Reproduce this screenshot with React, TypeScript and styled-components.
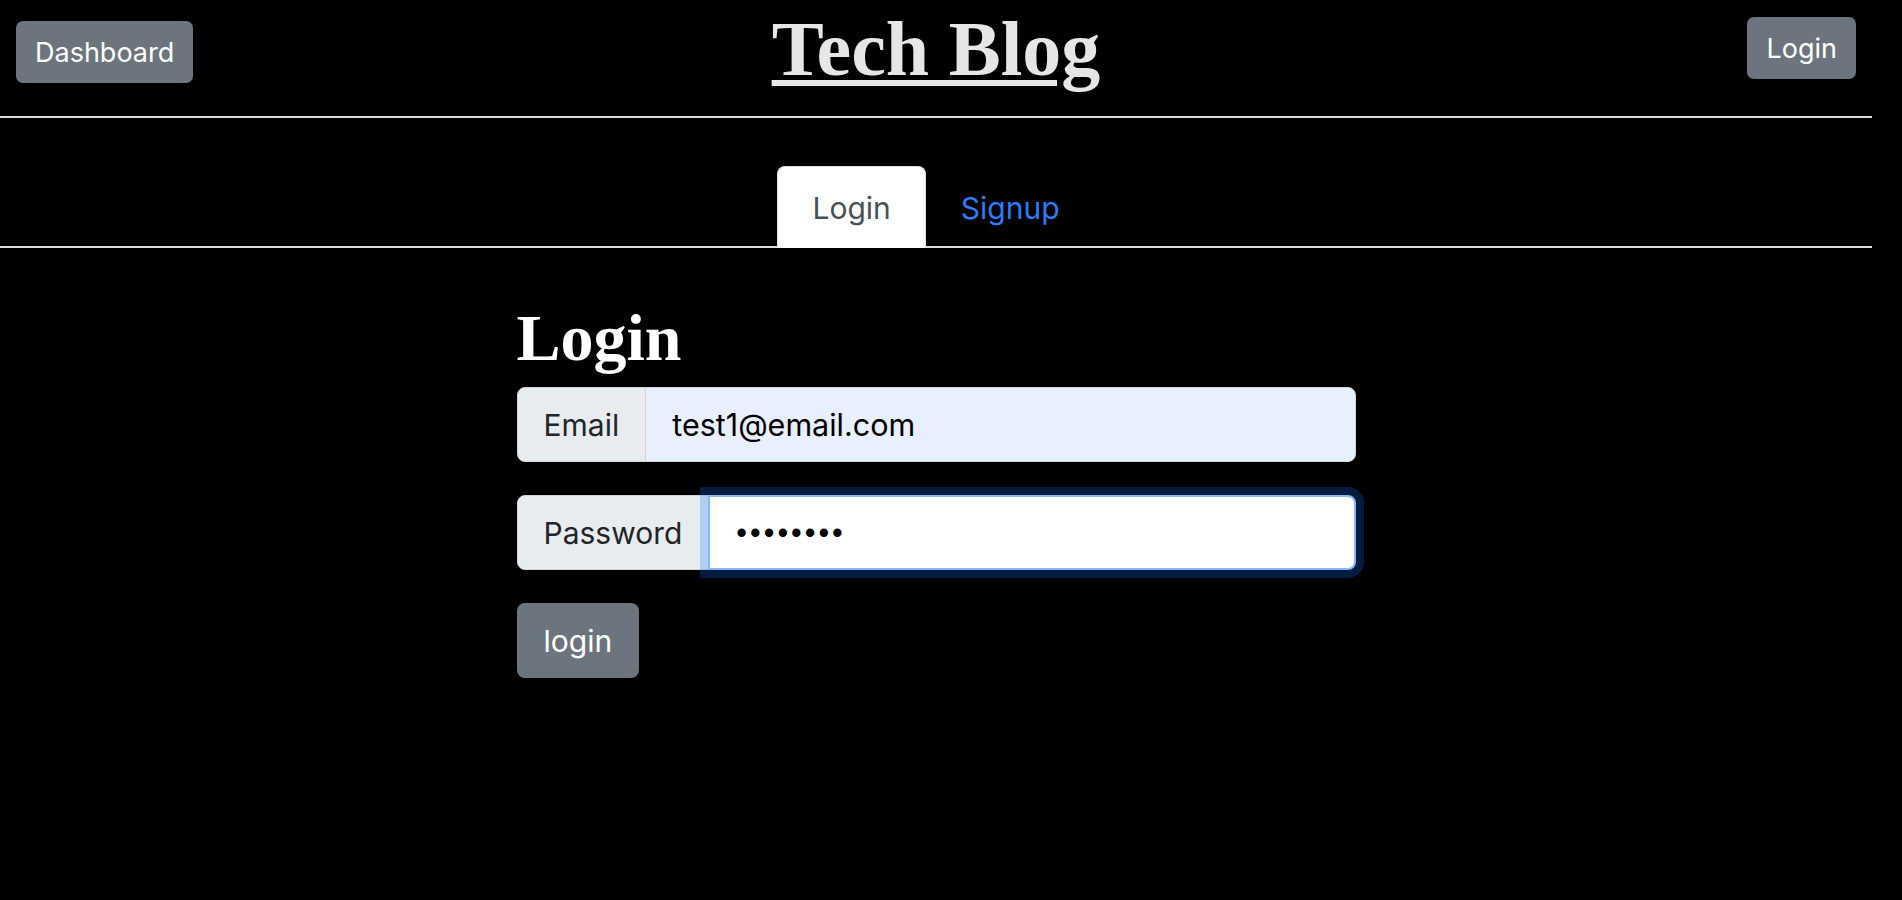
import React from "react";
import styled, { createGlobalStyle } from "styled-components";

const Global = createGlobalStyle`
  html, body { margin: 0; padding: 0; background: #000; }
  body { font-family: Inter, "Noto Sans", sans-serif; }
  * { box-sizing: border-box; }
`;

const Page = styled.div`
  width: 1872px;
  min-height: 900px;
  background: #000;
`;

const Header = styled.header`
  display: grid;
  grid-template-columns: 1fr auto 1fr;
  align-items: start;
  height: 118px;
  padding: 0 16px;
  border-bottom: 2px solid #dedede;
`;

const HeaderSlot = styled.div<{ $align: "start" | "end"; $top: number }>`
  display: flex;
  justify-content: ${(p) => (p.$align === "start" ? "flex-start" : "flex-end")};
  padding-top: ${(p) => p.$top}px;
`;

const Button = styled.button<{ $h: number }>`
  height: ${(p) => p.$h}px;
  padding: 0 19px;
  border: none;
  border-radius: 7px;
  background: #6c757d;
  color: #fff;
  font-family: Inter, "Noto Sans", sans-serif;
  font-size: 27px;
  line-height: 1;
  cursor: pointer;
`;

const Title = styled.h1`
  margin: 0;
  padding-top: 6px;
  font-family: "Liberation Serif", "DejaVu Serif", serif;
  font-weight: 700;
  font-size: 78px;
  line-height: 86px;
  color: #e6e6e6;
  text-decoration: underline;
  text-decoration-thickness: 6px;
  text-underline-offset: 5px;
`;

const TabBar = styled.nav`
  display: flex;
  justify-content: center;
  padding-top: 48px;
  border-bottom: 2px solid #dedede;
`;

const Tab = styled.a<{ $active?: boolean }>`
  display: flex;
  align-items: center;
  height: 82px;
  padding: 0 34px;
  margin-bottom: -2px;
  font-size: 30px;
  text-decoration: none;
  color: ${(p) => (p.$active ? "#495057" : "#2b7cf6")};
  background: ${(p) => (p.$active ? "#fff" : "transparent")};
  border: 1px solid ${(p) => (p.$active ? "#dee2e6" : "transparent")};
  border-bottom: none;
  border-radius: 8px 8px 0 0;
`;

const Main = styled.main`
  width: 839px;
  margin: 0 auto;
  padding-top: 50px;
  display: flex;
  flex-direction: column;
  align-items: flex-start;
`;

const Heading = styled.h2`
  margin: 0 0 9px;
  font-family: "Liberation Serif", "DejaVu Serif", serif;
  font-weight: 700;
  font-size: 66px;
  line-height: 80px;
  color: #fff;
`;

const Group = styled.div`
  display: flex;
  width: 100%;
  height: 75px;
  margin-bottom: 33px;
`;

const Label = styled.span`
  display: flex;
  align-items: center;
  padding: 0 26px;
  background: #e9ecef;
  border: 1px solid #ced4da;
  border-radius: 8px 0 0 8px;
  color: #212529;
  font-size: 30px;
`;

const Field = styled.input<{ $focused?: boolean; $autofill?: boolean; $secret?: boolean }>`
  flex: 1;
  min-width: 0;
  margin-left: -1px;
  padding: 0 26px;
  font-family: ${(p) => (p.$secret ? `"Liberation Sans", Arial, sans-serif` : `Inter, "Noto Sans", sans-serif`)};
  font-size: 30.5px;
  letter-spacing: ${(p) => (p.$secret ? "3px" : "0")};
  color: #000;
  outline: none;
  border-radius: 0 8px 8px 0;
  background: ${(p) => (p.$autofill ? "#e8f0fe" : "#fff")};
  border: ${(p) => (p.$focused ? "2px solid #86b7fe" : "1px solid #ced4da")};
  box-shadow: ${(p) => (p.$focused ? "0 0 0 8px rgba(13,110,253,0.25)" : "none")};
  position: relative;
  z-index: ${(p) => (p.$focused ? 2 : 0)};
`;

const Submit = styled(Button)`
  height: 75px;
  padding: 0 27px;
  border-radius: 8px;
  font-size: 30px;
`;

export default function App() {
  return (
    <Page>
      <Global />
      <Header>
        <HeaderSlot $align="start" $top={21}>
          <Button $h={62}>Dashboard</Button>
        </HeaderSlot>
        <Title>Tech Blog</Title>
        <HeaderSlot $align="end" $top={17}>
          <Button $h={62}>Login</Button>
        </HeaderSlot>
      </Header>
      <TabBar>
        <Tab $active href="#">Login</Tab>
        <Tab href="#">Signup</Tab>
      </TabBar>
      <Main>
        <Heading>Login</Heading>
        <Group>
          <Label>Email</Label>
          <Field $autofill type="email" defaultValue="test1@email.com" />
        </Group>
        <Group>
          <Label>Password</Label>
          <Field $focused $secret type="password" defaultValue="password" />
        </Group>
        <Submit $h={75}>login</Submit>
      </Main>
    </Page>
  );
}
